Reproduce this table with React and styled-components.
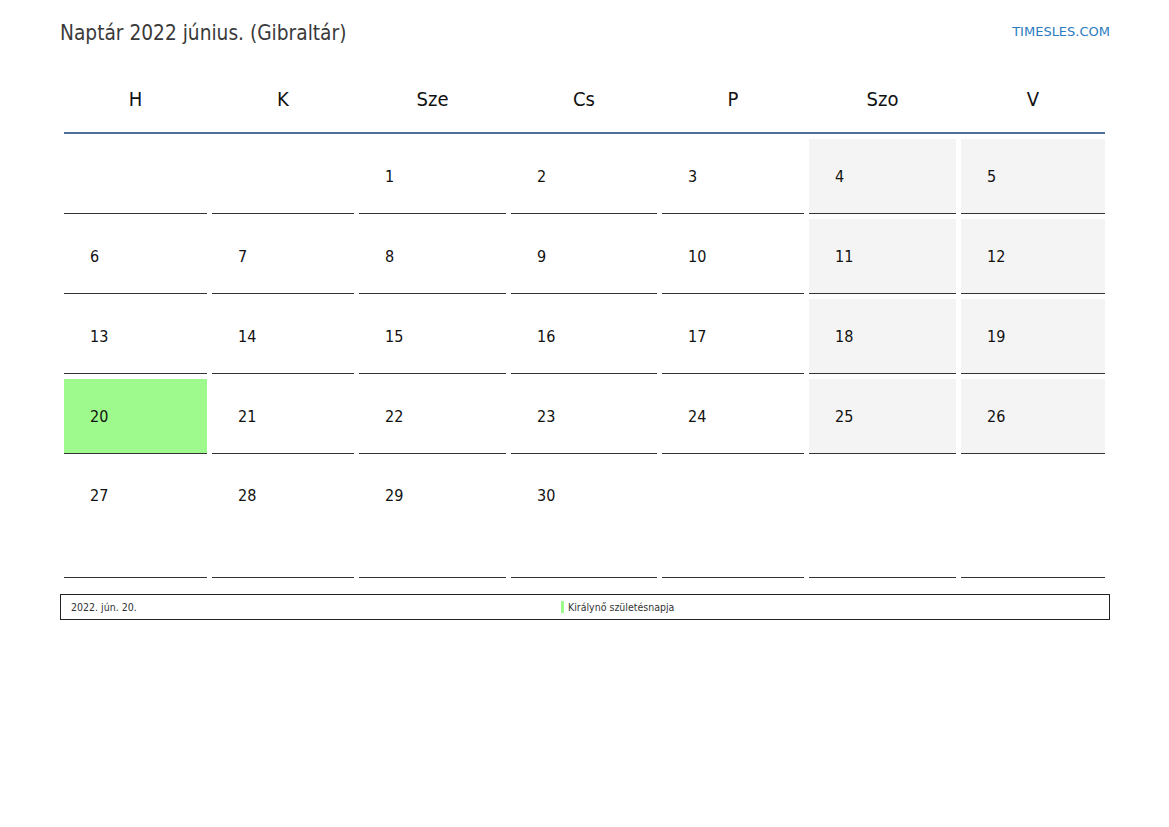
import React from 'react'
import styled, { createGlobalStyle } from 'styled-components'

const GlobalStyle = createGlobalStyle`
  body {
    margin: 0;
    background: #fff;
    font-family: "DejaVu Sans Condensed", "DejaVu Sans", sans-serif;
  }
`

const COLUMNS = '143px 142px 147px 146px 142px 147px 144px'

const StyledPage = styled.div`
  width: 1169px;
  height: 827px;
  padding-top: 21px;
  box-sizing: border-box;
`

const StyledTop = styled.div`
  display: flex;
  justify-content: space-between;
  align-items: center;
  width: 1050px;
  margin-left: 60px;
`

const StyledTitle = styled.h1`
  margin: 0;
  font-size: 20.7px;
  font-weight: normal;
  line-height: 24px;
  color: #3a3a3a;
`

const StyledBrand = styled.span`
  font-family: "DejaVu Sans", sans-serif;
  font-size: 13px;
  line-height: 24px;
  color: #2b7bc0;
  margin-top: -2px;
`

const StyledCalendar = styled.div`
  width: 1041px;
  margin: 21px 0 0 64px;
`

const StyledWeekdays = styled.div`
  display: grid;
  grid-template-columns: ${COLUMNS};
  column-gap: 5px;
  height: 66px;
  border-bottom: 2px solid #4f6f98;
`

const StyledWeekday = styled.div`
  display: flex;
  align-items: center;
  justify-content: center;
  font-size: 20px;
  color: #111;
`

const StyledDays = styled.div`
  display: grid;
  grid-template-columns: ${COLUMNS};
  grid-template-rows: repeat(4, 75px) 119px;
  gap: 5px;
  margin-top: 5px;
`

const StyledDay = styled.div`
  display: flex;
  align-items: ${p => (p.$last ? 'flex-start' : 'center')};
  padding: ${p => (p.$last ? '27px 0 0 26px' : '0 0 0 26px')};
  font-size: 16px;
  color: #111;
  background: ${p => (p.$holiday ? '#9efa8c' : p.$weekend ? '#f4f4f4' : '#fff')};
  border-bottom: 1px solid #333;
`

const StyledLegend = styled.div`
  display: grid;
  grid-template-columns: 500px 1fr;
  align-items: center;
  width: 1050px;
  height: 26px;
  margin: 16px 0 0 60px;
  border: 1px solid #222;
  box-sizing: border-box;
  font-size: 10.5px;
  color: #333;
`

const StyledLegendDate = styled.span`
  padding-left: 10px;
`

const StyledLegendName = styled.span`
  display: flex;
  align-items: center;
  gap: 4px;

  &::before {
    content: '';
    width: 3px;
    height: 12px;
    background: #9efa8c;
  }
`

const weekdays = ['H', 'K', 'Sze', 'Cs', 'P', 'Szo', 'V']

// június 2022: az első nap szerdára esik
const cells = Array.from({ length: 35 }, (_, i) => {
  const day = i - 1
  return day >= 1 && day <= 30 ? day : null
})

const App = () => (
  <>
    <GlobalStyle />
    <StyledPage>
      <StyledTop>
        <StyledTitle>Naptár 2022 június. (Gibraltár)</StyledTitle>
        <StyledBrand>TIMESLES.COM</StyledBrand>
      </StyledTop>
      <StyledCalendar>
        <StyledWeekdays>
          {weekdays.map(name => (
            <StyledWeekday key={name}>{name}</StyledWeekday>
          ))}
        </StyledWeekdays>
        <StyledDays>
          {cells.map((day, i) => {
            const col = i % 7
            const lastRow = i >= 28
            return (
              <StyledDay
                key={i}
                $weekend={col >= 5 && day !== null}
                $holiday={day === 20}
                $last={lastRow}
              >
                {day}
              </StyledDay>
            )
          })}
        </StyledDays>
      </StyledCalendar>
      <StyledLegend>
        <StyledLegendDate>2022. jún. 20.</StyledLegendDate>
        <StyledLegendName>Királynő születésnapja</StyledLegendName>
      </StyledLegend>
    </StyledPage>
  </>
)

export default App
